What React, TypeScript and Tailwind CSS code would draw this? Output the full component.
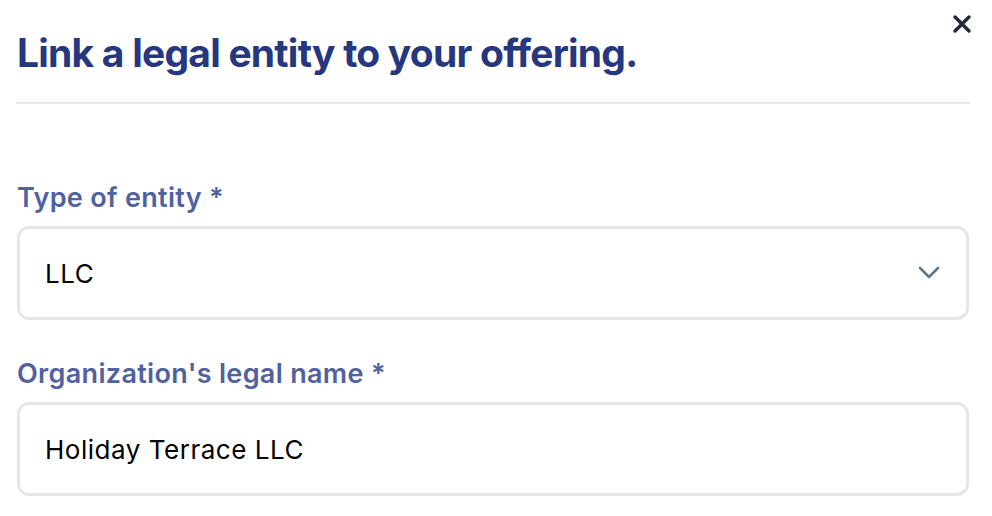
import React from "react";

export default function App() {
  return (
    <div className="w-[992px] h-[516px] bg-white overflow-hidden relative" style={{ fontFamily: "Inter, 'Noto Sans', sans-serif" }}>
      <button className="absolute left-[951px] top-[13px] w-[22px] h-[22px] flex items-center justify-center text-[#1f2937]">
        <svg width="20" height="20" viewBox="0 0 20 20" fill="none" stroke="currentColor" strokeWidth="3.4" strokeLinecap="round">
          <path d="M3 3 L17 17 M17 3 L3 17" />
        </svg>
      </button>
      <div className="pl-[16px] pr-[22px] pt-[29px]">
        <h1 className="text-[39px] leading-[47px] font-bold text-[#26367f] tracking-[-0.02em] pl-[1px]">
          Link a legal entity to your offering.
        </h1>
        <div className="mt-[26px] h-[2px] bg-[#e5e7eb]" />
        <div className="mt-[78px] pl-[1px] pr-[1px]">
          <label className="block text-[27px] leading-[32px] font-semibold text-[#5061a0] tracking-[0.012em]">Type of entity *</label>
          <div className="mt-[12px] h-[94px] rounded-[12px] border-[3px] border-[#e5e7eb] flex items-center justify-between pl-[25px] pr-[26px]">
            <span className="text-[26px] text-black tracking-[0.02em]">LLC</span>
            <svg width="22" height="14" viewBox="0 0 22 14" fill="none" stroke="#6b7280" strokeWidth="2.6" strokeLinecap="round" strokeLinejoin="round">
              <path d="M2 2 L11 11 L20 2" />
            </svg>
          </div>
          <label className="block mt-[38px] text-[27px] leading-[32px] font-semibold text-[#5061a0] tracking-[0.012em]">Organization's legal name *</label>
          <div className="mt-[12px] h-[94px] rounded-[12px] border-[3px] border-[#e5e7eb] flex items-center pl-[25px]">
            <span className="text-[26px] text-black tracking-[0.02em]">Holiday Terrace LLC</span>
          </div>
        </div>
      </div>
    </div>
  );
}
